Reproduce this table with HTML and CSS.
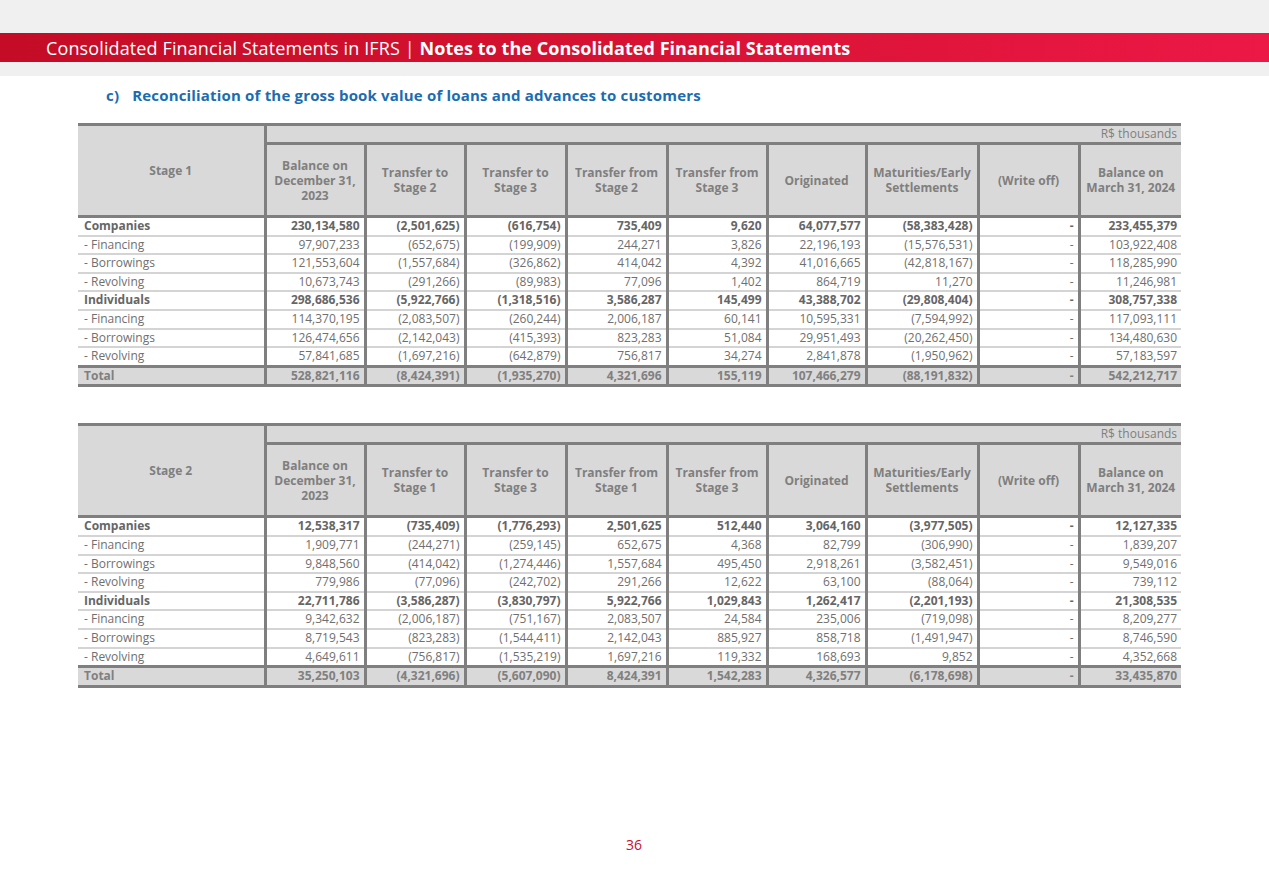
FILE: index.html
```html
<!DOCTYPE html>
<html lang="en">
<head>
<meta charset="utf-8">
<title>Notes to the Consolidated Financial Statements</title>
<link rel="stylesheet" href="styles.css">
</head>
<body>
<header class="topband">
  <div class="redbar">
    <span class="bar-light">Consolidated Financial Statements in IFRS | </span><span class="bar-bold">Notes to the Consolidated Financial Statements</span>
  </div>
</header>
<main class="page">
  <h2 class="section-title"><span class="sec-letter">c)</span><span>Reconciliation of the gross book value of loans and advances to customers</span></h2>

  <table class="fin">
    <colgroup>
      <col class="c-label"><col class="c-num"><col class="c-num"><col class="c-num3"><col class="c-num3"><col class="c-num"><col class="c-num6"><col class="c-num7"><col class="c-num8"><col class="c-num9">
    </colgroup>
    <thead>
      <tr class="unit-row"><th rowspan="2" class="stage">Stage 1</th><th colspan="9" class="unit">R$ thousands</th></tr>
      <tr class="head-row">
        <th>Balance on<br>December 31,<br>2023</th>
        <th>Transfer to<br>Stage 2</th>
        <th>Transfer to<br>Stage 3</th>
        <th>Transfer from<br>Stage 2</th>
        <th>Transfer from<br>Stage 3</th>
        <th>Originated</th>
        <th>Maturities/Early<br>Settlements</th>
        <th>(Write off)</th>
        <th>Balance on<br>March 31, 2024</th>
      </tr>
    </thead>
    <tbody>
      <tr class="group"><td>Companies</td><td>230,134,580</td><td>(2,501,625)</td><td>(616,754)</td><td>735,409</td><td>9,620</td><td>64,077,577</td><td>(58,383,428)</td><td>-</td><td>233,455,379</td></tr>
      <tr><td>- Financing</td><td>97,907,233</td><td>(652,675)</td><td>(199,909)</td><td>244,271</td><td>3,826</td><td>22,196,193</td><td>(15,576,531)</td><td>-</td><td>103,922,408</td></tr>
      <tr><td>- Borrowings</td><td>121,553,604</td><td>(1,557,684)</td><td>(326,862)</td><td>414,042</td><td>4,392</td><td>41,016,665</td><td>(42,818,167)</td><td>-</td><td>118,285,990</td></tr>
      <tr><td>- Revolving</td><td>10,673,743</td><td>(291,266)</td><td>(89,983)</td><td>77,096</td><td>1,402</td><td>864,719</td><td>11,270</td><td>-</td><td>11,246,981</td></tr>
      <tr class="group"><td>Individuals</td><td>298,686,536</td><td>(5,922,766)</td><td>(1,318,516)</td><td>3,586,287</td><td>145,499</td><td>43,388,702</td><td>(29,808,404)</td><td>-</td><td>308,757,338</td></tr>
      <tr><td>- Financing</td><td>114,370,195</td><td>(2,083,507)</td><td>(260,244)</td><td>2,006,187</td><td>60,141</td><td>10,595,331</td><td>(7,594,992)</td><td>-</td><td>117,093,111</td></tr>
      <tr><td>- Borrowings</td><td>126,474,656</td><td>(2,142,043)</td><td>(415,393)</td><td>823,283</td><td>51,084</td><td>29,951,493</td><td>(20,262,450)</td><td>-</td><td>134,480,630</td></tr>
      <tr class="last"><td>- Revolving</td><td>57,841,685</td><td>(1,697,216)</td><td>(642,879)</td><td>756,817</td><td>34,274</td><td>2,841,878</td><td>(1,950,962)</td><td>-</td><td>57,183,597</td></tr>
      <tr class="total"><td>Total</td><td>528,821,116</td><td>(8,424,391)</td><td>(1,935,270)</td><td>4,321,696</td><td>155,119</td><td>107,466,279</td><td>(88,191,832)</td><td>-</td><td>542,212,717</td></tr>
    </tbody>
  </table>

  <table class="fin second">
    <colgroup>
      <col class="c-label"><col class="c-num"><col class="c-num"><col class="c-num3"><col class="c-num3"><col class="c-num"><col class="c-num6"><col class="c-num7"><col class="c-num8"><col class="c-num9">
    </colgroup>
    <thead>
      <tr class="unit-row"><th rowspan="2" class="stage">Stage 2</th><th colspan="9" class="unit">R$ thousands</th></tr>
      <tr class="head-row">
        <th>Balance on<br>December 31,<br>2023</th>
        <th>Transfer to<br>Stage 1</th>
        <th>Transfer to<br>Stage 3</th>
        <th>Transfer from<br>Stage 1</th>
        <th>Transfer from<br>Stage 3</th>
        <th>Originated</th>
        <th>Maturities/Early<br>Settlements</th>
        <th>(Write off)</th>
        <th>Balance on<br>March 31, 2024</th>
      </tr>
    </thead>
    <tbody>
      <tr class="group"><td>Companies</td><td>12,538,317</td><td>(735,409)</td><td>(1,776,293)</td><td>2,501,625</td><td>512,440</td><td>3,064,160</td><td>(3,977,505)</td><td>-</td><td>12,127,335</td></tr>
      <tr><td>- Financing</td><td>1,909,771</td><td>(244,271)</td><td>(259,145)</td><td>652,675</td><td>4,368</td><td>82,799</td><td>(306,990)</td><td>-</td><td>1,839,207</td></tr>
      <tr><td>- Borrowings</td><td>9,848,560</td><td>(414,042)</td><td>(1,274,446)</td><td>1,557,684</td><td>495,450</td><td>2,918,261</td><td>(3,582,451)</td><td>-</td><td>9,549,016</td></tr>
      <tr><td>- Revolving</td><td>779,986</td><td>(77,096)</td><td>(242,702)</td><td>291,266</td><td>12,622</td><td>63,100</td><td>(88,064)</td><td>-</td><td>739,112</td></tr>
      <tr class="group"><td>Individuals</td><td>22,711,786</td><td>(3,586,287)</td><td>(3,830,797)</td><td>5,922,766</td><td>1,029,843</td><td>1,262,417</td><td>(2,201,193)</td><td>-</td><td>21,308,535</td></tr>
      <tr><td>- Financing</td><td>9,342,632</td><td>(2,006,187)</td><td>(751,167)</td><td>2,083,507</td><td>24,584</td><td>235,006</td><td>(719,098)</td><td>-</td><td>8,209,277</td></tr>
      <tr><td>- Borrowings</td><td>8,719,543</td><td>(823,283)</td><td>(1,544,411)</td><td>2,142,043</td><td>885,927</td><td>858,718</td><td>(1,491,947)</td><td>-</td><td>8,746,590</td></tr>
      <tr class="last"><td>- Revolving</td><td>4,649,611</td><td>(756,817)</td><td>(1,535,219)</td><td>1,697,216</td><td>119,332</td><td>168,693</td><td>9,852</td><td>-</td><td>4,352,668</td></tr>
      <tr class="total"><td>Total</td><td>35,250,103</td><td>(4,321,696)</td><td>(5,607,090)</td><td>8,424,391</td><td>1,542,283</td><td>4,326,577</td><td>(6,178,698)</td><td>-</td><td>33,435,870</td></tr>
    </tbody>
  </table>

  <footer class="page-num">36</footer>
</main>
</body>
</html>
```

FILE: styles.css
```css
html, body {
  margin: 0;
  padding: 0;
  background: #ffffff;
  font-family: "Open Sans", "Noto Sans", sans-serif;
}

.topband {
  background: #f0f0f0;
  padding: 33px 0 14px;
}

.redbar {
  height: 29px;
  background: linear-gradient(90deg, #c40c26 0%, #d3112f 40%, #ec1846 100%);
  color: #ffffff;
  font-size: 18px;
  line-height: 30px;
  padding-left: 46px;
  white-space: nowrap;
}

.bar-light {
  font-weight: 400;
  letter-spacing: 0.12px;
}

.bar-bold {
  font-weight: 700;
  letter-spacing: 0.05px;
}

.page {
  padding: 0 0 0 78px;
}

.section-title {
  margin: 9px 0 0 28px;
  display: flex;
  gap: 13px;
  font-size: 15px;
  line-height: 20px;
  font-weight: 700;
  color: #1b6cb0;
  letter-spacing: 0.18px;
}

.fin {
  width: 1103px;
  table-layout: fixed;
  border-collapse: collapse;
  margin-top: 18px;
  border-top: 3px solid #7f7f7f;
  border-bottom: 3px solid #7f7f7f;
  font-size: 12px;
  color: #6f6f6f;
}

.fin.second {
  margin-top: 36px;
}

.c-label { width: 187px; }
.c-num { width: 100px; }
.c-num3 { width: 101px; }
.c-num6 { width: 99px; }
.c-num7 { width: 112px; }
.c-num8 { width: 101px; }
.c-num9 { width: 102px; }

.fin th {
  background: #d9d9d9;
  color: #7f7f7f;
  font-weight: 700;
  padding: 0;
  text-align: center;
  border-left: 3px solid #7f7f7f;
}

.fin th.stage {
  border-left: none;
  border-right: 3px solid #7f7f7f;
  border-bottom: 3px solid #7f7f7f;
  font-size: 12px;
}

.unit-row th.unit {
  text-align: right;
  font-weight: 400;
  height: 16px;
  line-height: 16px;
  padding-right: 4px;
  font-size: 12px;
  border-bottom: 3px solid #7f7f7f;
}

.head-row th {
  height: 70px;
  line-height: 15px;
  font-size: 12px;
  border-bottom: 3px solid #7f7f7f;
}

.fin td {
  height: 16.6px;
  line-height: 16.6px;
  padding: 0 4px 0 5px;
  text-align: right;
  border-left: 3px solid #7f7f7f;
  border-bottom: 2px solid #d4d4d4;
  white-space: nowrap;
}

.fin td:first-child {
  border-left: none;
  text-align: left;
  padding-left: 6px;
}

.fin tr.group td {
  font-weight: 700;
  color: #666666;
}

.fin tr.last td {
  border-bottom: 3px solid #7f7f7f;
}

.fin tr.total td {
  background: #d9d9d9;
  font-weight: 700;
  color: #808080;
  border-bottom: none;
}

.page-num {
  margin: 147px 0 0 471px;
  width: 170px;
  text-align: center;
  color: #c8102e;
  font-size: 14px;
}
```
